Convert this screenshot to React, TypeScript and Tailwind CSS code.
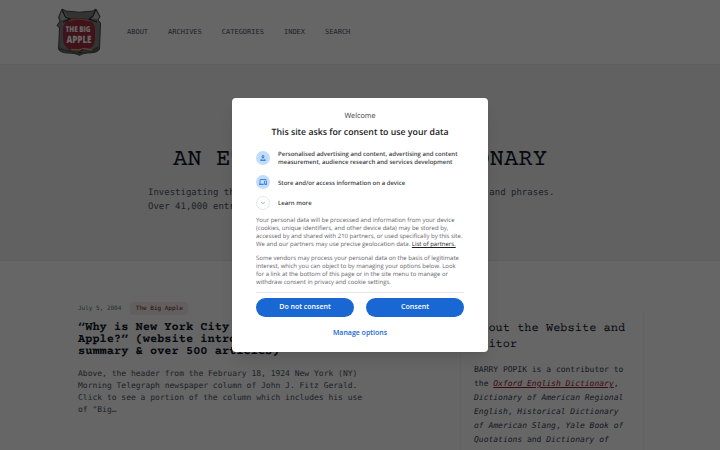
import { ChevronDown } from "lucide-react";
import { MdDevices, MdOutlinePerson } from "react-icons/md";

const links = ["ABOUT", "ARCHIVES", "CATEGORIES", "INDEX", "SEARCH"];

function Logo() {
  return (
    <svg width="46" height="48" viewBox="0 0 46 48" className="shrink-0">
      <path
        d="M6 1 Q10 4 16 3.500 Q23 5 31 3.500 Q37 4 40 1 L44 8.500 L42 12 L44.500 15 L43.500 41 Q42 44.500 35 44.800 Q27 45 23.500 47.500 Q20 45 11 45 Q4 44.500 2.500 41 L3.500 20 L1 17.500 L4 13 L2.500 9.500Z"
        fill="#7b8280"
        stroke="#3a3a3a"
        strokeWidth=".9"
      />
      <path d="M6 2 L13 10 L5 12.500 L4 9Z" fill="#aeb4b1" />
      <path d="M39.500 2.500 L34 10.500 L42 11 L43 8.500Z" fill="#b9bebb" />
      <path
        d="M6 2 L9.500 9 L14 11 L7 14 M39.500 2 L37 8 L33 11 L41 14"
        stroke="#282828"
        strokeWidth="1.200"
        fill="none"
      />
      <rect x="7" y="10" width="32" height="33" rx="12" fill="#9d3040" />
      <path d="M13 13 Q22 9 34 13" stroke="#a9746a" strokeWidth="1.500" fill="none" />
      <path
        d="M3 39 Q10 44 17 41.500 L23 44.500 Q33 44 43 38 L42 43 Q34 44 23.500 46.500 Q12 44 3 42Z"
        fill="#555b58"
      />
      <path d="M15 41.500 L23 42 L28 40.500 L36 42" stroke="#c9ab80" strokeWidth="1.500" fill="none" />
      <path d="M22 42.500 L24 45 L27 41" stroke="#2b2b2b" fill="none" />
      <g
        fill="#fff"
        fontFamily="Open Sans"
        fontWeight="800"
      >
        <text x="9.500" y="23.500" fontSize="8" textLength="25" lengthAdjust="spacingAndGlyphs">
          THE BIG
        </text>
        <text x="10.500" y="34.500" fontSize="10" textLength="25" lengthAdjust="spacingAndGlyphs">
          APPLE
        </text>
      </g>
    </svg>
  );
}

function Header() {
  return (
    <header className="flex h-16 items-center bg-white pl-[56px]">
      <Logo />
      <nav className="ml-[25px] flex gap-5 text-[7px] text-gray-600">
        {links.map((link) => (
          <a key={link} href="#">
            {link}
          </a>
        ))}
      </nav>
    </header>
  );
}

function Hero() {
  return (
    <section className="h-[197px] border-y border-[#ececec] bg-[#f3f3f3] pt-20">
      <h1 className="text-center font-[Courier_Prime,Courier,Liberation_Mono,monospace] text-2xl leading-8 text-gray-900">
        AN ETYMOLOGICAL DICTIONARY
      </h1>
      <p className="mt-[9px] ml-[148px] text-[9px] leading-[14px] text-gray-600">
        Investigating the origins of American words, names, quotations and
        phrases.
        <br />
        Over 41,000 entries.
      </p>
    </section>
  );
}

function Article() {
  return (
    <article className="w-[305px] pt-10">
      <div className="flex h-[14px] items-center gap-[9px] text-[6px]">
        <time className="text-gray-500">July 5, 2004</time>
        <span className="rounded-[4px] bg-[#f8eded] px-[5.5px] leading-[13px] text-[#5b2222]">
          The Big Apple
        </span>
      </div>
      <h2 className="mt-2 font-[Courier_Prime,Courier,Liberation_Mono,monospace] text-xs leading-3 font-bold whitespace-nowrap text-gray-900">
        “Why is New York City called the Big
        <br />
        Apple?” (website introduction
        <br />
        summary & over 500 articles)
      </h2>
      <p className="mt-[9px] text-[8px] leading-3 text-gray-600">
        Above, the header from the February 18, 1924 New York (NY)
        <br />
        Morning Telegraph newspaper column of John J. Fitz Gerald.
        <br />
        Click to see a portion of the column which includes his use
        <br />
        of "Big…
      </p>
    </article>
  );
}

function Sidebar() {
  return (
    <aside className="mt-[51px] ml-[77px] h-[180px] w-[184px] border-x border-gray-100 pl-[13px]">
      <h3 className="pt-[10px] font-[Courier_Prime,Courier,Liberation_Mono,monospace] text-xs leading-4 font-medium text-gray-900">
        About the Website and Editor
      </h3>
      <p className="mt-[9px] text-[8px] leading-[14px] whitespace-nowrap text-gray-700">
        BARRY POPIK is a contributor to
        <br />
        the{" "}
        <a href="#" className="text-[#991b2b] italic underline">
          Oxford English Dictionary
        </a>
        ,
        <br />
        <i>Dictionary of American Regional</i>
        <br />
        <i>English</i>, <i>Historical Dictionary</i>
        <br />
        <i>of American Slang</i>, <i>Yale Book of</i>
        <br />
        <i>Quotations</i> and <i>Dictionary of</i>
      </p>
    </aside>
  );
}

function ConsentDialog() {
  return (
    <div
      role="dialog"
      className="h-[254px] w-64 rounded bg-white px-6 font-[Open_Sans,sans-serif] text-[#202124] shadow-lg"
    >
      <p className="pt-[13px] text-center text-[7.25px] leading-[11px] font-medium text-[#3c4043]">
        Welcome
      </p>
      <h2 className="mt-1 text-center text-[8.75px] leading-[13px] font-semibold whitespace-nowrap">
        This site asks for consent to use your data
      </h2>
      <ul className="mt-[11px] text-[6px] leading-2 font-semibold text-[#3c4043]">
        <li className="flex items-center gap-2">
          <span className="flex size-[14px] shrink-0 items-center justify-center rounded-full bg-[#c2dcfb] text-[#1967d2]">
            <MdOutlinePerson size={8} />
          </span>
          <span className="whitespace-nowrap">
            Personalised advertising and content, advertising and content
            <br />
            measurement, audience research and services development
          </span>
        </li>
        <li className="mt-[9px] flex items-center gap-2">
          <span className="flex size-[14px] shrink-0 items-center justify-center rounded-full bg-[#c2dcfb] text-[#1967d2]">
            <MdDevices size={8} />
          </span>
          <span className="pt-0.5">Store and/or access information on a device</span>
        </li>
        <li className="mt-[7px] flex items-center gap-2">
          <span className="flex size-[14px] shrink-0 items-center justify-center rounded-full border border-gray-200 text-gray-600">
            <ChevronDown size={6} />
          </span>
          <span>Learn more</span>
        </li>
      </ul>
      <div className="mt-[6px] text-[6px] leading-2 whitespace-nowrap text-[#5f6368]">
        <p>
          Your personal data will be processed and information from your device
          <br />
          (cookies, unique identifiers, and other device data) may be stored by,
          <br />
          accessed by and shared with 210 partners, or used specifically by this site.
          <br />
          We and our partners may use precise geolocation data.{" "}
          <a href="#" className="font-medium text-[#202124] underline">
            List of partners.
          </a>
        </p>
        <p className="mt-[6px]">
          Some vendors may process your personal data on the basis of legitimate
          <br />
          interest, which you can object to by managing your options below. Look
          <br />
          for a link at the bottom of this page or in the site menu to manage or
          <br />
          withdraw consent in privacy and cookie settings.
        </p>
      </div>
      <div className="mt-[6px] flex gap-3 border-t border-gray-200 pt-[5px] text-[7px] font-semibold text-white">
        <button className="h-[19px] flex-1 rounded-full bg-[#1967d2]">
          Do not consent
        </button>
        <button className="h-[19px] flex-1 rounded-full bg-[#1967d2]">
          Consent
        </button>
      </div>
      <button className="mt-[11px] block w-full text-center text-[7px] leading-[10px] font-semibold text-[#1967d2]">
        Manage options
      </button>
    </div>
  );
}

export default function App() {
  return (
    <div className="relative h-[450px] w-[720px] overflow-hidden bg-white font-[DejaVu_Sans_Mono,monospace] [text-rendering:geometricPrecision]">
      <Header />
      <Hero />
      <main className="flex pl-[78px]">
        <Article />
        <Sidebar />
      </main>
      <div className="absolute inset-0 flex items-start justify-center bg-black/60 pt-[98px]">
        <ConsentDialog />
      </div>
    </div>
  );
}
